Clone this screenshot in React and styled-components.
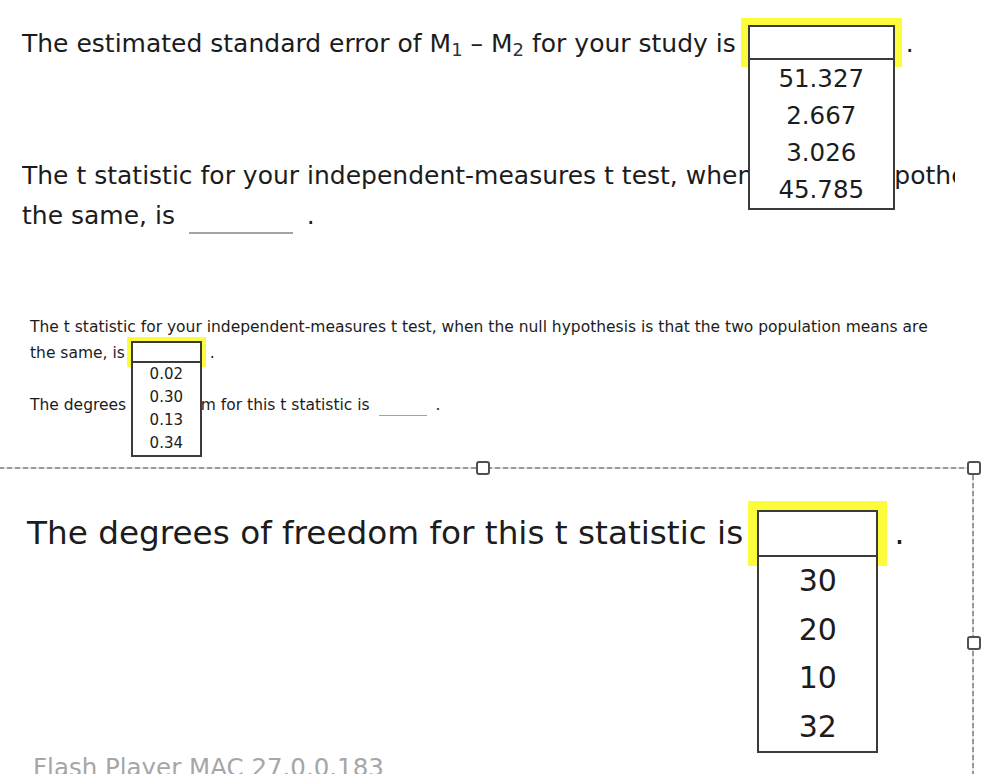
import React from "react";
import styled, { createGlobalStyle } from "styled-components";

const GlobalStyle = createGlobalStyle`
  html, body {
    margin: 0;
    padding: 0;
    background: #fff;
  }
  body {
    font-family: "DejaVu Sans", Verdana, sans-serif;
    color: #1c1c1c;
    overflow: hidden;
  }
`;

const Page = styled.div`
  position: relative;
  width: 994px;
  height: 774px;
  overflow: hidden;
`;

const Question = styled.section`
  width: ${({ $width }) => $width}px;
  padding-left: ${({ $left }) => $left}px;
  margin-top: ${({ $top }) => $top}px;
  font-size: ${({ $size }) => $size}px;
  line-height: ${({ $line }) => $line}px;
  box-sizing: border-box;
`;

// long lines are clipped by the player's stage edge
const Line = styled.p`
  margin: ${({ $gap }) => $gap || 0}px 0 0;
  white-space: nowrap;
  overflow: ${({ $clip }) => ($clip ? "hidden" : "visible")};
`;

const Sub = styled.sub`
  font-size: 0.72em;
  line-height: 0;
  vertical-align: -0.22em;
  color: #333;
`;

const Highlight = styled.span`
  display: inline-block;
  background: #fdfc3b;
  padding: ${({ $pad }) => $pad}px;
  margin: -${({ $pull }) => $pull}px ${({ $after }) => $after}px -${({ $pull }) => $pull}px
    ${({ $before }) => $before}px;
  vertical-align: ${({ $shift }) => $shift}px;
`;

const SelectBox = styled.div`
  position: relative;
  width: ${({ $w }) => $w}px;
  height: ${({ $h }) => $h}px;
  border: 2px solid #3b3b3b;
  background: #fff;
`;

const OptionList = styled.ul`
  position: absolute;
  top: 100%;
  left: -2px;
  right: -2px;
  margin: 0;
  padding: 0;
  list-style: none;
  background: #fff;
  border: 2px solid #3b3b3b;
  font-size: ${({ $size }) => $size}px;
  line-height: ${({ $line }) => $line}px;
  text-align: center;
  color: #1c1c1c;
`;

const Blank = styled.span`
  display: inline-block;
  width: ${({ $w }) => $w}px;
  border-bottom: ${({ $thick }) => $thick}px solid #a3a3a3;
  vertical-align: -${({ $drop }) => $drop}px;
  margin: 0 ${({ $space }) => $space}px;
`;

const Frame = styled.div`
  position: relative;
  margin: 49px 0 0 -9px;
  width: 984px;
  height: 350px;
  padding: 41px 0 0 36px;
  box-sizing: border-box;
  background:
    repeating-linear-gradient(90deg, #9a9a9a 0 5px, #e4e4e4 5px 8px) top left / 100% 2px no-repeat,
    repeating-linear-gradient(180deg, #9a9a9a 0 5px, #e4e4e4 5px 8px) top right 1px / 2px 100% no-repeat;
`;

const Handle = styled.span`
  position: absolute;
  width: 10px;
  height: 10px;
  border: 2px solid #505050;
  border-radius: 3px;
  background: #fff;
  left: ${({ $x }) => $x};
  top: ${({ $y }) => $y};
  transform: translate(-50%, -50%);
`;

const BigLine = styled.p`
  margin: 0;
  font-size: 32.7px;
  line-height: 50px;
  white-space: nowrap;
`;

const Footer = styled.div`
  margin-top: 195px;
  margin-left: 6px;
  font-size: 24.5px;
  line-height: 30px;
  color: #a6a6a6;
  white-space: nowrap;
`;

const Dropdown = ({ pad, pull, shift, before, after, w, h, size, line, options }) => (
  <Highlight $pad={pad} $pull={pull} $shift={shift} $before={before} $after={after}>
    <SelectBox $w={w} $h={h}>
      <OptionList $size={size} $line={line}>
        {options.map((o) => (
          <li key={o}>{o}</li>
        ))}
      </OptionList>
    </SelectBox>
  </Highlight>
);

export default function App() {
  return (
    <Page>
      <GlobalStyle />
      <Question $width={955} $left={22} $top={24} $size={25} $line={40}>
        <Line>
          The estimated standard error of M<Sub>1</Sub> – M<Sub>2</Sub> for your study is
          <Dropdown
            pad={7}
            pull={10}
            shift={-5}
            before={5}
            after={4}
            w={143}
            h={31}
            size={24.5}
            line={37}
            options={["51.327", "2.667", "3.026", "45.785"]}
          />
          .
        </Line>
        <Line $gap={92} $clip>
          The t statistic for your independent-measures t test, when the null hypothesis is that the two population means are
        </Line>
        <Line>
          the same, is <Blank $w={104} $thick={2} $drop={10} $space={6} /> .
        </Line>
      </Question>

      <Question $width={994} $left={30} $top={78} $size={15.5} $line={26}>
        <Line>
          The t statistic for your independent-measures t test, when the null hypothesis is that the two population means are
        </Line>
        <Line>
          the same, is
          <Dropdown
            pad={4}
            pull={4}
            shift={-5}
            before={2}
            after={4}
            w={67}
            h={18}
            size={15}
            line={23}
            options={["0.02", "0.30", "0.13", "0.34"]}
          />
          .
        </Line>
        <Line $gap={26}>
          The degrees of freedom for this t statistic is <Blank $w={48} $thick={1} $drop={6} $space={4} /> .
        </Line>
      </Question>

      <Frame>
        <Handle $x="492px" $y="1px" />
        <Handle $x="983px" $y="1px" />
        <Handle $x="983px" $y="176px" />
        <BigLine>
          The degrees of freedom for this t statistic is
          <Dropdown
            pad={9}
            pull={10}
            shift={-12}
            before={5}
            after={7}
            w={117}
            h={43}
            size={30}
            line={48.5}
            options={["30", "20", "10", "32"]}
          />
          .
        </BigLine>
        <Footer>Flash Player MAC 27.0.0.183</Footer>
      </Frame>
    </Page>
  );
}
